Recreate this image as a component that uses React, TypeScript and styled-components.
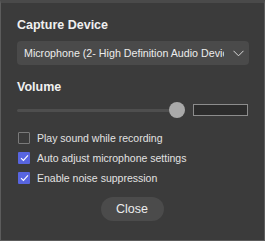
import React from "react";
import styled, { createGlobalStyle } from "styled-components";

const Global = createGlobalStyle`
  html, body { margin: 0; padding: 0; background: #ffffff; }
  body { font-family: "Liberation Sans", Arial, sans-serif; }
`;

const Panel = styled.div`
  box-sizing: border-box;
  width: 265px;
  height: 241px;
  background: #3b3b3b;
  border: 1px solid #5c5c5c;
  border-top: 3px solid #4a4a4a;
  padding: 14px 15px 0 16px;
  display: flex;
  flex-direction: column;
  color: #e6e6e6;
`;

const Heading = styled.div<{ $gap?: number }>`
  font-weight: bold;
  font-size: 12.5px;
  line-height: 16px;
  color: #f0f0f0;
  margin-top: ${(p) => p.$gap ?? 0}px;
`;

const Select = styled.div`
  margin-top: 8px;
  height: 24px;
  width: 232px;
  border-radius: 4px;
  background: #4a4a4a;
  display: flex;
  align-items: center;
  padding: 0 5px 0 7px;
  box-sizing: border-box;
  gap: 9px;
`;

const SelectText = styled.span`
  flex: 1;
  font-size: 10.7px;
  white-space: nowrap;
  overflow: hidden;
  color: #ececec;
`;

const SliderRow = styled.div`
  margin-top: 6px;
  display: flex;
  align-items: center;
  height: 18px;
  gap: 8px;
`;

const Track = styled.div`
  position: relative;
  width: 168px;
  height: 3px;
  background: #4e4e4e;
  border-radius: 2px;
`;

const Thumb = styled.div`
  position: absolute;
  top: 50%;
  width: 16px;
  height: 16px;
  margin: -8px 0 0 -8px;
  border-radius: 50%;
  background: #a9a9a9;
`;

const ValueBox = styled.div`
  box-sizing: border-box;
  width: 55px;
  height: 12px;
  border: 1px solid #8c8c8c;
  background: #2c2c2c;
`;

const Options = styled.div`
  margin-top: 13px;
  display: flex;
  flex-direction: column;
  gap: 8px;
`;

const Option = styled.label`
  display: flex;
  align-items: center;
  gap: 7px;
  height: 12px;
  font-size: 10.5px;
  color: #e2e2e2;
  padding-left: 1px;
`;

const Box = styled.span<{ $checked: boolean }>`
  box-sizing: border-box;
  width: 12px;
  height: 12px;
  border-radius: 1px;
  background: ${(p) => (p.$checked ? "#5865e0" : "transparent")};
  border: ${(p) => (p.$checked ? "none" : "1px solid #7a7a7a")};
  display: flex;
  align-items: center;
  justify-content: center;
`;

const Footer = styled.div`
  margin-top: 13px;
  display: flex;
  justify-content: center;
  padding-right: 2px;
`;

const CloseButton = styled.button`
  width: 63px;
  height: 24px;
  border-radius: 12px;
  border: none;
  background: #4b4b4b;
  color: #ececec;
  font-family: "Liberation Sans", Arial, sans-serif;
  font-size: 12.5px;
  padding: 0;
`;

const Check = () => (
  <svg width="9" height="8" viewBox="0 0 9 8">
    <path d="M1 4.2 L3.4 6.4 L8 1.4" fill="none" stroke="#ffffff" strokeWidth="1.1" />
  </svg>
);

const Chevron = () => (
  <svg width="11" height="7" viewBox="0 0 11 7">
    <path d="M0.5 0.8 L5.5 5.8 L10.5 0.8" fill="none" stroke="#d8d8d8" strokeWidth="1" />
  </svg>
);

const options = [
  { label: "Play sound while recording", checked: false },
  { label: "Auto adjust microphone settings", checked: true },
  { label: "Enable noise suppression", checked: true },
];

export default function App() {
  const volume = 0.95;
  return (
    <>
      <Global />
      <Panel>
        <Heading>Capture Device</Heading>
        <Select>
          <SelectText>Microphone (2- High Definition Audio Device)</SelectText>
          <Chevron />
        </Select>
        <Heading $gap={14}>Volume</Heading>
        <SliderRow>
          <Track>
            <Thumb style={{ left: `${volume * 100}%` }} />
          </Track>
          <ValueBox />
        </SliderRow>
        <Options>
          {options.map((o) => (
            <Option key={o.label}>
              <Box $checked={o.checked}>{o.checked && <Check />}</Box>
              {o.label}
            </Option>
          ))}
        </Options>
        <Footer>
          <CloseButton>Close</CloseButton>
        </Footer>
      </Panel>
    </>
  );
}
